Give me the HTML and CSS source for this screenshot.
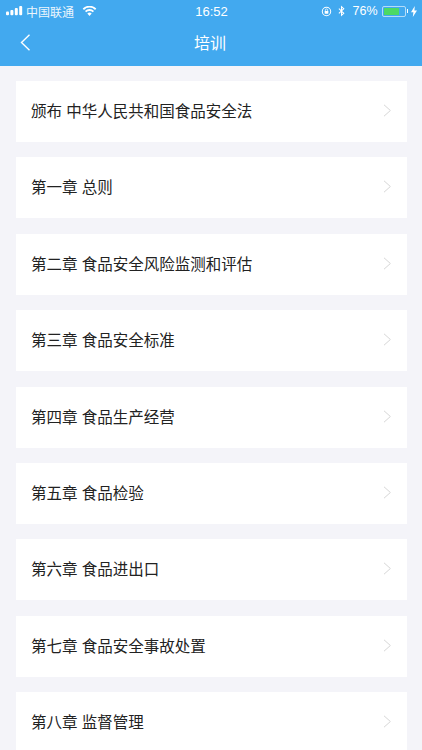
FILE: index.html
```html
<!DOCTYPE html>
<html lang="zh-CN">
<head>
    <meta charset="UTF-8">
    <meta name="viewport" content="width=device-width, initial-scale=1.0">
    <title>培训</title>
    <link rel="stylesheet" href="styles.css">
</head>
<body>
    <header class="header">
        <div class="status-bar">
            <div class="status-left">
                <svg class="signal" width="17" height="10" viewBox="0 0 17 10">
                    <rect x="0" y="5.6" width="3" height="3.6" rx="1"/>
                    <rect x="4.4" y="4" width="3" height="5.2" rx="1"/>
                    <rect x="8.8" y="2" width="3" height="7.2" rx="1"/>
                    <rect x="13.2" y="0" width="3" height="9.2" rx="1"/>
                </svg>
                <span class="carrier">中国联通</span>
                <svg class="wifi" width="15" height="10" viewBox="0 0 16 11">
                    <path d="M8 11 5.6 8.3a3.4 3.4 0 0 1 4.8 0Z"/>
                    <path d="M4.4 7 3 5.5a7 7 0 0 1 10 0L11.6 7a5 5 0 0 0-7.2 0Z"/>
                    <path d="M1.9 4.3.5 2.8a10.6 10.6 0 0 1 15 0l-1.4 1.5a8.6 8.6 0 0 0-12.2 0Z"/>
                </svg>
            </div>
            <span class="clock">16:52</span>
            <div class="status-right">
                <svg class="lock-icon" width="11" height="11" viewBox="0 0 12 12">
                    <circle cx="6" cy="6" r="4.6" fill="none" stroke="#fff" stroke-width="1.1"/>
                    <rect x="4" y="5.4" width="4" height="3" rx=".5" fill="#fff"/>
                    <path d="M4.8 5.4V4.4a1.2 1.2 0 0 1 2.4 0v1" fill="none" stroke="#fff" stroke-width=".8"/>
                </svg>
                <svg class="bt-icon" width="7" height="12" viewBox="0 0 8 12">
                    <path d="M1 3.3 6.6 8.6 4 11V1l2.6 2.4L1 8.7" fill="none" stroke="#fff" stroke-width="1.2"/>
                </svg>
                <span class="battery-text">76%</span>
                <div class="battery">
                    <div class="battery-level"></div>
                </div>
                <div class="battery-tip"></div>
                <svg width="6" height="11" viewBox="0 0 6 11">
                    <path d="M3.8 0 0 6.2h2.4L1.8 11 6 4.4H3.4Z" fill="#fff"/>
                </svg>
            </div>
        </div>
        <div class="nav-bar">
            <svg class="back" width="11" height="17" viewBox="0 0 11 17">
                <path d="M9.5.8 1.5 8.5l8 7.7" fill="none" stroke="#fff" stroke-width="1.4"/>
            </svg>
            <h1>培训</h1>
        </div>
    </header>

    <ul class="chapter-list">
        <li class="chapter"><span>颁布 中华人民共和国食品安全法</span><svg class="arrow" width="9" height="13" viewBox="0 0 9 13"><path d="M1 .8l6.4 5.7L1 12.2"/></svg></li>
        <li class="chapter"><span>第一章 总则</span><svg class="arrow" width="9" height="13" viewBox="0 0 9 13"><path d="M1 .8l6.4 5.7L1 12.2"/></svg></li>
        <li class="chapter"><span>第二章 食品安全风险监测和评估</span><svg class="arrow" width="9" height="13" viewBox="0 0 9 13"><path d="M1 .8l6.4 5.7L1 12.2"/></svg></li>
        <li class="chapter"><span>第三章 食品安全标准</span><svg class="arrow" width="9" height="13" viewBox="0 0 9 13"><path d="M1 .8l6.4 5.7L1 12.2"/></svg></li>
        <li class="chapter"><span>第四章 食品生产经营</span><svg class="arrow" width="9" height="13" viewBox="0 0 9 13"><path d="M1 .8l6.4 5.7L1 12.2"/></svg></li>
        <li class="chapter"><span>第五章 食品检验</span><svg class="arrow" width="9" height="13" viewBox="0 0 9 13"><path d="M1 .8l6.4 5.7L1 12.2"/></svg></li>
        <li class="chapter"><span>第六章 食品进出口</span><svg class="arrow" width="9" height="13" viewBox="0 0 9 13"><path d="M1 .8l6.4 5.7L1 12.2"/></svg></li>
        <li class="chapter"><span>第七章 食品安全事故处置</span><svg class="arrow" width="9" height="13" viewBox="0 0 9 13"><path d="M1 .8l6.4 5.7L1 12.2"/></svg></li>
        <li class="chapter"><span>第八章 监督管理</span><svg class="arrow" width="9" height="13" viewBox="0 0 9 13"><path d="M1 .8l6.4 5.7L1 12.2"/></svg></li>
    </ul>
</body>
</html>
```

FILE: styles.css
```css
* {
    margin: 0;
    padding: 0;
    box-sizing: border-box;
    font-family: 'Liberation Sans', 'Noto Sans CJK SC', sans-serif;
}

body {
    background: #f4f4f9;
    height: 750px;
    overflow: hidden;
}

/* Header */
.header {
    background: #42a9ef;
    color: #fff;
    height: 66px;
}

.status-bar {
    height: 22px;
    padding: 0 5px 0 6px;
    display: flex;
    justify-content: space-between;
    align-items: center;
    font-size: 12px;
}

.status-left, .status-right {
    display: flex;
    align-items: center;
    flex: 1;
}

.status-right {
    justify-content: flex-end;
    gap: 3px;
}

.signal {
    fill: #fff;
    margin-right: 3px;
}

.carrier {
    font-size: 12px;
    opacity: 0.9;
}

.wifi {
    fill: #fff;
    margin-left: 8px;
}

.clock {
    font-size: 13px;
}

.bt-icon {
    margin: 0 2px 0 3px;
}

.battery-text {
    font-size: 12.5px;
    margin: 0 1px 0 2px;
}

.battery {
    width: 24px;
    height: 11px;
    border: 1px solid rgba(255, 255, 255, 0.6);
    border-radius: 2px;
    padding: 1px;
}

.battery-level {
    width: 76%;
    height: 100%;
    background: #4cd964;
}

.battery-tip {
    width: 1.5px;
    height: 4px;
    background: #fff;
    margin-left: -2px;
}

.nav-bar {
    height: 44px;
    display: flex;
    align-items: center;
    justify-content: center;
    position: relative;
}

.nav-bar h1 {
    font-size: 16px;
    font-weight: normal;
    padding-bottom: 5px;
    margin-right: 2px;
}

.back {
    position: absolute;
    left: 20px;
    top: 12px;
}

/* Chapters */
.chapter-list {
    list-style: none;
    padding: 15px 15.5px 0;
    display: flex;
    flex-direction: column;
    gap: 15.4px;
}

.chapter {
    background: #fff;
    height: 61px;
    padding: 0 15px 0 15.5px;
    display: flex;
    justify-content: space-between;
    align-items: center;
    font-size: 15.5px;
    color: #222;
}

.chapter span {
    padding-bottom: 3px;
}

.arrow {
    margin-bottom: 2px;
    fill: none;
    stroke: #d6d6d6;
    stroke-width: 1;
}
```
